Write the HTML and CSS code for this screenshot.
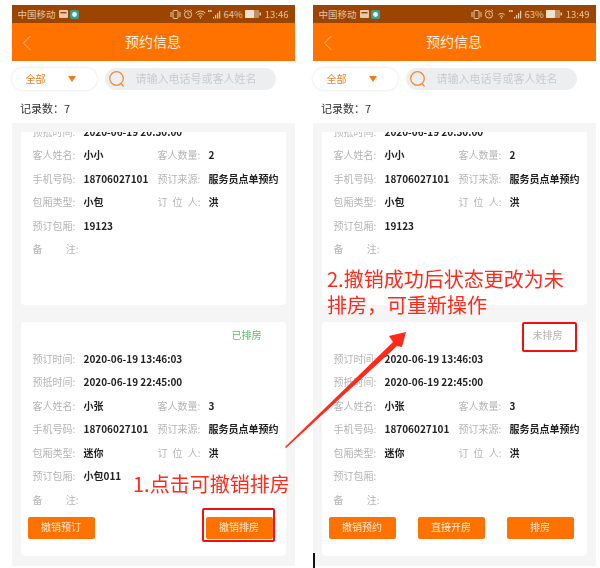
FILE: index.html
```html
<!DOCTYPE html>
<html lang="zh">
<head>
<meta charset="utf-8">
<title>预约信息</title>
<link rel="stylesheet" href="styles.css">
</head>
<body>
<main class="sheet">
  <section class="phone">
    <div class="status">
      <span class="carrier">中国移动</span>
      <svg class="sicon" width="9" height="8" viewBox="0 0 9 8"><rect width="9" height="8" rx="1" fill="#e4c9b0"/><rect x="1.500" y="2" width="6" height="1.400" fill="#9c4500"/></svg>
      <svg class="sicon" width="9" height="9" viewBox="0 0 9 9"><rect width="9" height="9" rx="2" fill="#3f9c8f"/><circle cx="4.500" cy="4.500" r="2.400" fill="#dff"/></svg>
      <span class="status-right">
        <svg width="11" height="9" viewBox="0 0 11 9"><rect x="3" y=".5" width="5" height="8" rx="1" fill="none" stroke="#e4c9b0"/><path d="M1 2v5M10 2v5" stroke="#e4c9b0"/></svg>
        <svg width="10" height="10" viewBox="0 0 10 10"><circle cx="5" cy="5.500" r="3.600" fill="none" stroke="#e4c9b0"/><path d="M5 3.500v2l1.400 1M1 2l1.500-1.300M9 2L7.500.7" fill="none" stroke="#e4c9b0" stroke-width=".9"/></svg>
        <svg width="11" height="9" viewBox="0 0 11 9"><path d="M.7 3a7 7 0 0 1 9.600 0M2.300 4.800a4.600 4.600 0 0 1 6.400 0M3.900 6.500a2.300 2.300 0 0 1 3.200 0" fill="none" stroke="#e4c9b0"/><circle cx="5.500" cy="8" r=".8" fill="#e4c9b0"/></svg>
        <svg width="13" height="9" viewBox="0 0 13 9"><path d="M0 0h1.500v2H0zM2.200 0h1.500v2H2.200zM5 8.500h1.200V7H5zM7 8.500h1.200V5H7zM9 8.500h1.200V3H9zM11 8.500h1.200V.8H11z" fill="#e4c9b0"/></svg>
        <span>64%</span>
        <svg width="16" height="8" viewBox="0 0 16 8"><rect width="14" height="8" rx="1" fill="#e4c9b0" opacity=".55"/><rect width="9" height="8" rx="1" fill="#efe0d0"/><rect x="14.500" y="2.500" width="1.500" height="3" fill="#e4c9b0"/></svg>
        <span class="clock">13:46</span>
      </span>
    </div>
    <header class="title-bar">
      <svg class="back" width="10" height="16" viewBox="0 0 10 16"><path d="M8.500 1L1.500 8l7 7" fill="none" stroke="#ffc79a" stroke-width=".9"/></svg>
      <h1>预约信息</h1>
    </header>
    <div class="filter">
      <div class="select"><span>全部</span><i class="caret"></i></div>
      <div class="search">
        <svg width="18" height="18" viewBox="0 0 18 18"><circle cx="8.500" cy="8.500" r="6.800" fill="none" stroke="#f58a35" stroke-width="1.300"/><path d="M13.500 14l2 2.500" stroke="#f58a35" stroke-width="1.300"/></svg>
        <span>请输入电话号或客人姓名</span>
      </div>
    </div>
    <p class="count">记录数：7</p>
    <div class="list">
      <div class="viewport">
        <article class="card first">
          <div class="row"><span class="k">预抵时间:</span><span class="v">2020-06-19 20:30:00</span></div>
          <div class="row"><span class="k">客人姓名:</span><span class="v">小小</span><span class="k">客人数量:</span><span class="v">2</span></div>
          <div class="row"><span class="k">手机号码:</span><span class="v">18706027101</span><span class="k">预订来源:</span><span class="v">服务员点单预约</span></div>
          <div class="row"><span class="k">包厢类型:</span><span class="v">小包</span><span class="k spread"><b>订</b><b>位</b><b>人:</b></span><span class="v">洪</span></div>
          <div class="row"><span class="k">预订包厢:</span><span class="v">19123</span></div>
          <div class="row"><span class="k spread memo"><b>备</b><b>注:</b></span></div>
        </article>
        <article class="card second">
          <div class="state done">已排房</div>
          <div class="row"><span class="k">预订时间:</span><span class="v">2020-06-19 13:46:03</span></div>
          <div class="row"><span class="k">预抵时间:</span><span class="v">2020-06-19 22:45:00</span></div>
          <div class="row"><span class="k">客人姓名:</span><span class="v">小张</span><span class="k">客人数量:</span><span class="v">3</span></div>
          <div class="row"><span class="k">手机号码:</span><span class="v">18706027101</span><span class="k">预订来源:</span><span class="v">服务员点单预约</span></div>
          <div class="row"><span class="k">包厢类型:</span><span class="v">迷你</span><span class="k spread"><b>订</b><b>位</b><b>人:</b></span><span class="v">洪</span></div>
          <div class="row"><span class="k">预订包厢:</span><span class="v">小包011</span></div>
          <div class="row"><span class="k spread memo"><b>备</b><b>注:</b></span></div>
          <div class="actions"><button>撤销预订</button><button>撤销排房</button></div>
        </article>
      </div>
    </div>
  </section>

  <section class="phone">
    <div class="status">
      <span class="carrier">中国移动</span>
      <svg class="sicon" width="9" height="8" viewBox="0 0 9 8"><rect width="9" height="8" rx="1" fill="#e4c9b0"/><rect x="1.500" y="2" width="6" height="1.400" fill="#9c4500"/></svg>
      <svg class="sicon" width="9" height="9" viewBox="0 0 9 9"><rect width="9" height="9" rx="2" fill="#3f9c8f"/><circle cx="4.500" cy="4.500" r="2.400" fill="#dff"/></svg>
      <span class="status-right">
        <svg width="11" height="9" viewBox="0 0 11 9"><rect x="3" y=".5" width="5" height="8" rx="1" fill="none" stroke="#e4c9b0"/><path d="M1 2v5M10 2v5" stroke="#e4c9b0"/></svg>
        <svg width="10" height="10" viewBox="0 0 10 10"><circle cx="5" cy="5.500" r="3.600" fill="none" stroke="#e4c9b0"/><path d="M5 3.500v2l1.400 1M1 2l1.500-1.300M9 2L7.500.7" fill="none" stroke="#e4c9b0" stroke-width=".9"/></svg>
        <svg width="11" height="9" viewBox="0 0 11 9"><path d="M2.300 4.800a4.600 4.600 0 0 1 6.400 0M3.900 6.500a2.300 2.300 0 0 1 3.200 0" fill="none" stroke="#e4c9b0"/><circle cx="5.500" cy="8" r=".8" fill="#e4c9b0"/></svg>
        <svg width="13" height="9" viewBox="0 0 13 9"><path d="M0 0h1.500v2H0zM2.200 0h1.500v2H2.200zM5 8.500h1.200V7H5zM7 8.500h1.200V5H7zM9 8.500h1.200V3H9zM11 8.500h1.200V.8H11z" fill="#e4c9b0"/></svg>
        <span>63%</span>
        <svg width="16" height="8" viewBox="0 0 16 8"><rect width="14" height="8" rx="1" fill="#e4c9b0" opacity=".55"/><rect width="9" height="8" rx="1" fill="#efe0d0"/><rect x="14.500" y="2.500" width="1.500" height="3" fill="#e4c9b0"/></svg>
        <span class="clock">13:49</span>
      </span>
    </div>
    <header class="title-bar">
      <svg class="back" width="10" height="16" viewBox="0 0 10 16"><path d="M8.500 1L1.500 8l7 7" fill="none" stroke="#ffc79a" stroke-width=".9"/></svg>
      <h1>预约信息</h1>
    </header>
    <div class="filter">
      <div class="select"><span>全部</span><i class="caret"></i></div>
      <div class="search">
        <svg width="18" height="18" viewBox="0 0 18 18"><circle cx="8.500" cy="8.500" r="6.800" fill="none" stroke="#f58a35" stroke-width="1.300"/><path d="M13.500 14l2 2.500" stroke="#f58a35" stroke-width="1.300"/></svg>
        <span>请输入电话号或客人姓名</span>
      </div>
    </div>
    <p class="count">记录数：7</p>
    <div class="list">
      <div class="viewport">
        <article class="card first">
          <div class="row"><span class="k">预抵时间:</span><span class="v">2020-06-19 20:30:00</span></div>
          <div class="row"><span class="k">客人姓名:</span><span class="v">小小</span><span class="k">客人数量:</span><span class="v">2</span></div>
          <div class="row"><span class="k">手机号码:</span><span class="v">18706027101</span><span class="k">预订来源:</span><span class="v">服务员点单预约</span></div>
          <div class="row"><span class="k">包厢类型:</span><span class="v">小包</span><span class="k spread"><b>订</b><b>位</b><b>人:</b></span><span class="v">洪</span></div>
          <div class="row"><span class="k">预订包厢:</span><span class="v">19123</span></div>
          <div class="row"><span class="k spread memo"><b>备</b><b>注:</b></span></div>
        </article>
        <article class="card second">
          <div class="state">未排房</div>
          <div class="row"><span class="k">预订时间:</span><span class="v">2020-06-19 13:46:03</span></div>
          <div class="row"><span class="k">预抵时间:</span><span class="v">2020-06-19 22:45:00</span></div>
          <div class="row"><span class="k">客人姓名:</span><span class="v">小张</span><span class="k">客人数量:</span><span class="v">3</span></div>
          <div class="row"><span class="k">手机号码:</span><span class="v">18706027101</span><span class="k">预订来源:</span><span class="v">服务员点单预约</span></div>
          <div class="row"><span class="k">包厢类型:</span><span class="v">迷你</span><span class="k spread"><b>订</b><b>位</b><b>人:</b></span><span class="v">洪</span></div>
          <div class="row"><span class="k">预订包厢:</span></div>
          <div class="row"><span class="k spread memo"><b>备</b><b>注:</b></span></div>
          <div class="actions"><button>撤销预约</button><button>直接开房</button><button>排房</button></div>
        </article>
      </div>
    </div>
  </section>

  <p class="note note-one">1.点击可撤销排房</p>
  <p class="note note-two">2.撤销成功后状态更改为未排房，可重新操作</p>
  <i class="mark mark-button"></i>
  <i class="mark mark-state"></i>
  <i class="cursor"></i>
  <svg class="arrow" width="600" height="568" viewBox="0 0 600 568"><path d="M285 447L393 342l-4-6 17-4-4 15-5-1L286 448z" fill="#ff2a1a"/></svg>
</main>
</body>
</html>
```
FILE: styles.css
```css
* { box-sizing: border-box; }
html, body { margin: 0; padding: 0; background: #fff; }
body { font-family: "Noto Sans CJK SC", "Noto Sans", sans-serif; }
.sheet { position: relative; width: 600px; height: 568px; overflow: hidden; display: flex; align-items: flex-start; gap: 18px; padding: 5px 0 0 11.5px; }
.phone { width: 283px; height: 561px; flex: none; display: flex; flex-direction: column; filter: blur(.4px); }
.status { height: 18px; flex: none; background: #9c4500; color: #e0c2a6; font-size: 9.5px; display: flex; align-items: center; gap: 2px; padding: 0 6px; }
.carrier { margin-right: 1px; }
.sicon { flex: none; }
.status-right { margin-left: auto; display: flex; align-items: center; gap: 2px; }
.clock { margin-left: 2px; }
.title-bar { height: 38px; flex: none; background: #ff7200; display: flex; align-items: center; justify-content: center; position: relative; padding-bottom: 2px; }
.title-bar h1 { margin: 0; color: #ffeedd; font-size: 14px; font-weight: 400; }
.back { position: absolute; left: 10px; top: 12px; }
.filter { height: 35px; flex: none; display: flex; align-items: center; gap: 8px; padding-top: 1px; }
.select { width: 85px; height: 22px; background: #fff; border-radius: 11px; box-shadow: 0 0 3px #ddd; display: flex; align-items: center; padding: 0 0 2px 14px; color: #f57f22; font-size: 10px; }
.caret { margin: 2px 0 0 22px; width: 0; height: 0; border-style: solid; border-color: #f57a1c transparent transparent; border-width: 6px 4.5px 0; }
.search { width: 171px; height: 22px; background: #eceef0; border-radius: 11px; display: flex; align-items: center; gap: 10px; padding: 0 0 0 3px; color: #c9cbce; font-size: 11px; }
.search span { margin-top: -2px; white-space: nowrap; }
.count { margin: 0; height: 27px; flex: none; padding: 3px 0 0 8.5px; font-size: 11px; line-height: 18px; color: #333; }
.list { flex: 1; background: #f5f5f5; padding-top: 9px; min-height: 0; }
.viewport { height: 100%; overflow: hidden; padding: 0 9px; }
.card { background: #fff; border-radius: 4px; padding: 0 0 0 12px; }
.first { height: 185px; margin: -12.5px 0 17px; }
.second { height: 234px; padding-top: 1px; }
.row { display: flex; height: 23.5px; align-items: center; line-height: 23.5px; white-space: nowrap; font-size: 10px; }
.k { width: 43px; flex: none; color: #b4b4b4; }
.k.spread { display: flex; justify-content: space-between; }
.k.spread b { font-weight: 400; }
.k.memo { width: 46px; }
.v { margin-left: 8px; width: 74px; flex: none; color: #222; font-weight: 700; }
.state { height: 24px; line-height: 24px; text-align: right; padding-right: 24px; font-size: 10px; color: #b4b4b4; }
.state.done { color: #5fb96a; }
.actions { display: flex; justify-content: space-between; padding-top: 5.5px; margin: 0 13px 0 -5px; }
.actions button { width: 67px; height: 22px; padding: 0 0 2px; border: 0; border-radius: 2px; background: #ff7200; color: #ffe9d6; font: 400 10px/20px "Noto Sans CJK SC", sans-serif; }
.note { position: absolute; margin: 0; color: #ff2a1a; font-size: 20px; }
.note-one { left: 133px; top: 470px; line-height: 28px; white-space: nowrap; }
.note-two { left: 327px; top: 266px; width: 245px; line-height: 26px; font-family: "Noto Sans CJK TC", sans-serif; }
.mark { position: absolute; border: 2px solid #f01010; border-radius: 2px; }
.mark-button { left: 202px; top: 508px; width: 73px; height: 34px; }
.mark-state { left: 522px; top: 322px; width: 55px; height: 30px; }
.cursor { position: absolute; left: 313px; top: 553px; width: 1.5px; height: 15px; background: #111; }
.arrow { position: absolute; left: 0; top: 0; }
```
